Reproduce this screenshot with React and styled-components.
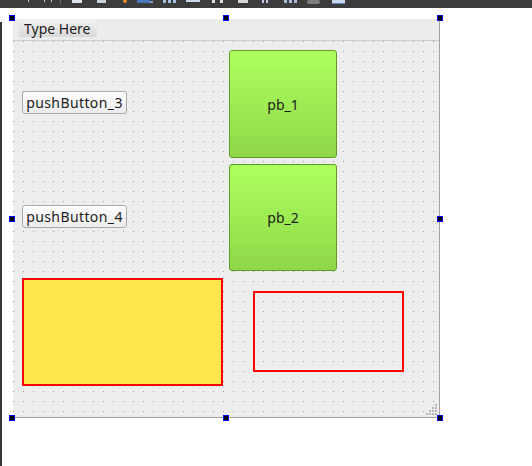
import React from 'react';
import styled, { createGlobalStyle } from 'styled-components';

const GlobalStyle = createGlobalStyle`
  html, body {
    margin: 0;
    padding: 0;
    background: #ffffff;
  }
  body {
    font-family: "Noto Sans", "DejaVu Sans", sans-serif;
  }
`;

const Page = styled.div`
  width: 532px;
  height: 466px;
  display: flex;
  flex-direction: column;
  overflow: hidden;
  background: #ffffff;
`;

const ToolStrip = styled.div`
  height: 8px;
  background: #3c3c3c;
  flex-shrink: 0;
`;

const Workspace = styled.div`
  position: relative;
  flex: 1;

  &::before {
    content: '';
    position: absolute;
    left: 0;
    top: 14px;
    bottom: 0;
    width: 2px;
    background: #353535;
  }
`;

const Form = styled.div`
  position: relative;
  margin: 11px 0 0 13px;
  width: 426px;
  height: 398px;
  background: #ededed;
  border-right: 1px solid #a2a2a2;
  border-bottom: 1px solid #a2a2a2;
  display: flex;
  flex-direction: column;
`;

const MenuBar = styled.div`
  height: 20px;
  padding: 1px 0 0 6px;
  background: #ececec;
  border-bottom: 1px solid #cbcbcb;
  display: flex;
  align-items: flex-start;
`;

const MenuItem = styled.div`
  height: 17px;
  padding: 0 5px;
  width: 68px;
  display: flex;
  align-items: center;
  font-size: 14px;
  color: #1c1c1c;
  background: linear-gradient(#f0f0f0, #d9d9d9);
  white-space: nowrap;
`;

const Central = styled.div`
  flex: 1;
  display: grid;
  grid-template-columns: 201px 1fr;
  grid-template-rows: 108px 108px 108px;
  column-gap: 6px;
  row-gap: 6px;
  padding: 9px 0 0 9px;
  align-content: start;
  background-color: #ededed;
  background-image: radial-gradient(circle at 0.5px 0.5px, #9c9c9c 0.7px, transparent 0.9px);
  background-size: 10px 10px;
`;

const Cell = styled.div`
  display: flex;
  align-items: flex-start;
  justify-content: flex-start;
`;

const PushButton = styled.button`
  width: 105px;
  height: 23px;
  margin-top: 41px;
  padding: 0 0 1px;
  border: 1px solid #ababab;
  border-radius: 3px;
  background: linear-gradient(#fdfdfd, #ececec);
  font-family: "Noto Sans", "DejaVu Sans", sans-serif;
  font-size: 14px;
  letter-spacing: 0.4px;
  color: #1c1c1c;
`;

const GreenButton = styled.button`
  width: 108px;
  height: ${p => p.$h}px;
  padding: 0;
  border: 1px solid #5f9e23;
  border-radius: 3px;
  background: linear-gradient(#adff5e, #8fd749);
  font-family: "Noto Sans", "DejaVu Sans", sans-serif;
  font-size: 14px;
  color: #1c1c1c;
`;

const YellowFrame = styled.div`
  width: 201px;
  height: 108px;
  box-sizing: border-box;
  border: 2px solid #ff0000;
  background: #fee64f;
`;

const OutlineFrame = styled.div`
  width: 151px;
  height: 81px;
  box-sizing: border-box;
  margin: 13px 0 0 24px;
  border: 2px solid #ff0000;
`;

const Handle = styled.div`
  position: absolute;
  left: ${p => p.$x}px;
  top: ${p => p.$y}px;
  width: 6px;
  height: 6px;
  box-sizing: border-box;
  border: 1px solid #0000ff;
  background: #000000;
`;

const Grip = styled.svg`
  position: absolute;
  right: 1px;
  bottom: 1px;
`;

const ToolIcons = () => (
  <svg width="532" height="8" style={{ display: 'block' }}>
    <rect x="28" y="0" width="1" height="2" fill="#cfcfcf" />
    <rect x="44" y="0" width="1" height="2" fill="#cfcfcf" />
    <rect x="51" y="0" width="1" height="2" fill="#cfcfcf" />
    <rect x="60" y="0" width="1" height="4" fill="#6a6a6a" />
    <rect x="72" y="0" width="10" height="3" fill="#dfe4ec" />
    <rect x="97" y="0" width="9" height="3" fill="#c7d2e2" />
    <circle cx="125" cy="1" r="2" fill="#e8902a" />
    <rect x="137" y="0" width="13" height="3" fill="#4a78c0" />
    <rect x="150" y="1" width="3" height="2" fill="#7aa0d8" />
    <rect x="163" y="0" width="3" height="3" fill="#a8bde0" />
    <rect x="168" y="0" width="3" height="3" fill="#a8bde0" />
    <rect x="173" y="0" width="3" height="3" fill="#a8bde0" />
    <rect x="186" y="0" width="14" height="2" fill="#c9d6ea" />
    <rect x="212" y="0" width="3" height="3" fill="#e0e0e0" />
    <rect x="220" y="0" width="3" height="3" fill="#e0e0e0" />
    <rect x="238" y="0" width="10" height="3" fill="#d6d6d6" />
    <rect x="262" y="0" width="2" height="3" fill="#b8c8e6" />
    <rect x="266" y="0" width="2" height="3" fill="#b8c8e6" />
    <rect x="284" y="0" width="3" height="3" fill="#a8bde0" />
    <rect x="289" y="0" width="3" height="3" fill="#a8bde0" />
    <rect x="294" y="0" width="3" height="3" fill="#a8bde0" />
    <rect x="307" y="0" width="13" height="4" rx="2" fill="#7d7d7d" />
    <rect x="332" y="0" width="13" height="3" fill="#c8d8ee" />
    <rect x="332" y="3" width="13" height="1" fill="#5d86c4" />
  </svg>
);

const handles = [
  [9, 7], [223, 7], [437, 7],
  [9, 208], [437, 208],
  [9, 407], [223, 407], [437, 407],
];

const gripDots = [
  [9, 0], [6, 3], [9, 3], [3, 6], [6, 6], [9, 6], [0, 9], [3, 9], [6, 9], [9, 9],
];

const App = () => (
  <>
    <GlobalStyle />
    <Page>
      <ToolStrip>
        <ToolIcons />
      </ToolStrip>
      <Workspace>
        <Form>
          <MenuBar>
            <MenuItem>Type Here</MenuItem>
          </MenuBar>
          <Central>
            <Cell>
              <PushButton>pushButton_3</PushButton>
            </Cell>
            <Cell>
              <GreenButton $h={108}>pb_1</GreenButton>
            </Cell>
            <Cell>
              <PushButton>pushButton_4</PushButton>
            </Cell>
            <Cell>
              <GreenButton $h={107}>pb_2</GreenButton>
            </Cell>
            <Cell>
              <YellowFrame />
            </Cell>
            <Cell>
              <OutlineFrame />
            </Cell>
          </Central>
          <Grip width="12" height="12">
            {gripDots.map(([x, y]) => (
              <rect key={`${x}-${y}`} x={x} y={y} width="2" height="2" fill="#b4b4b4" />
            ))}
          </Grip>
        </Form>
        {handles.map(([x, y]) => (
          <Handle key={`${x}-${y}`} $x={x} $y={y} />
        ))}
      </Workspace>
    </Page>
  </>
);

export default App;
